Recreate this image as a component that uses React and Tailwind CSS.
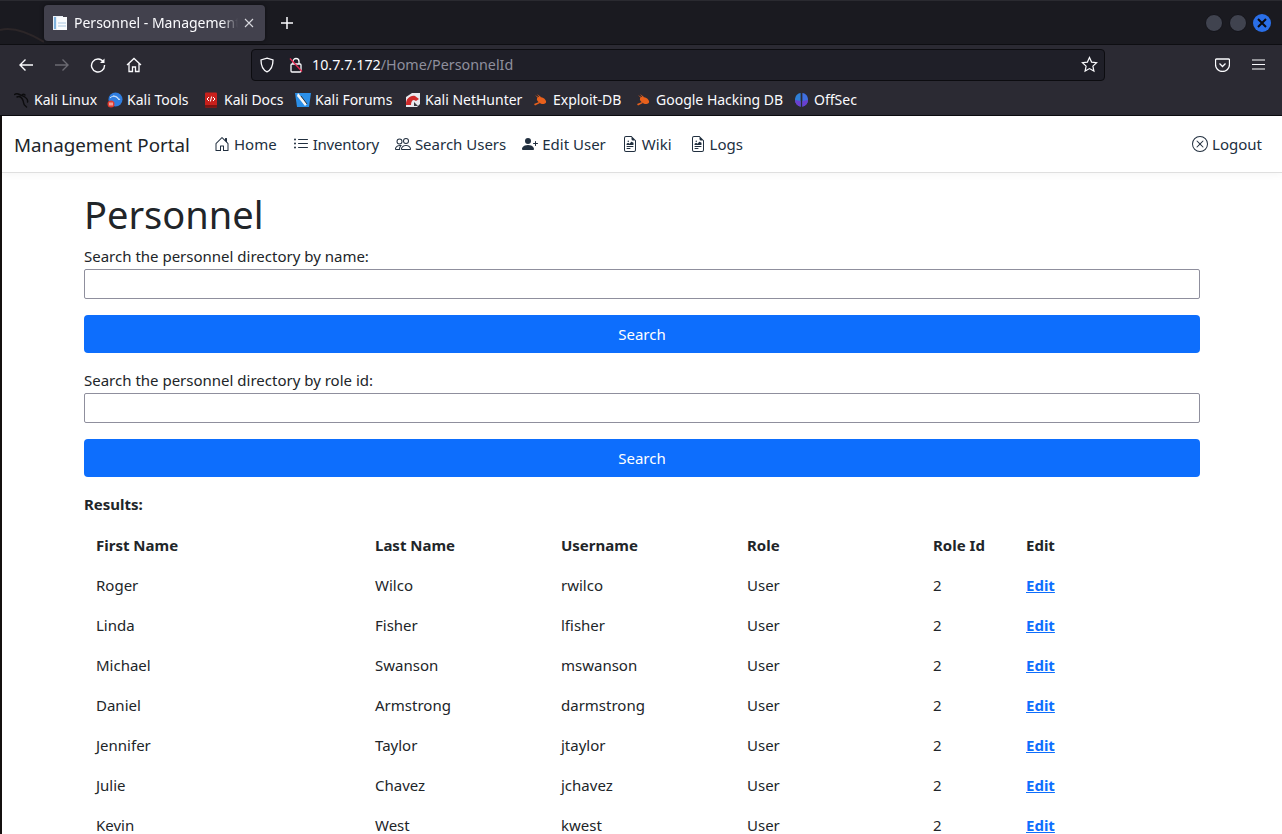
import React from 'react';
import { BsHouseDoor, BsListUl, BsPeople, BsPersonPlusFill, BsFileEarmarkRichtext, BsXCircle } from 'react-icons/bs';

const navLinks = [
  { name: 'Home', icon: BsHouseDoor, extra: '' },
  { name: 'Inventory', icon: BsListUl, extra: 'tracking-[-0.2px]' },
  { name: 'Search Users', icon: BsPeople, extra: '' },
  { name: 'Edit User', icon: BsPersonPlusFill, extra: '' },
  { name: 'Wiki', icon: BsFileEarmarkRichtext, extra: 'mr-[2px]' },
  { name: 'Logs', icon: BsFileEarmarkRichtext, extra: '' },
];

const people = [
  ['Roger', 'Wilco', 'rwilco'],
  ['Linda', 'Fisher', 'lfisher'],
  ['Michael', 'Swanson', 'mswanson'],
  ['Daniel', 'Armstrong', 'darmstrong'],
  ['Jennifer', 'Taylor', 'jtaylor'],
  ['Julie', 'Chavez', 'jchavez'],
  ['Kevin', 'West', 'kwest'],
];

const KaliDragon = () => (
  <svg width="16" height="16" viewBox="0 0 16 16" fill="none" stroke="#0c0c0e" strokeWidth="1.400" strokeLinecap="round">
    <path d="M0.500 2.500c1.500-1 3-1 5 0s4 1.500 6 3 2.500 3 2 4.500M3 5c2-1 4 0 5 1.500s1.500 3 1.500 4 1 3 3 4.500M8 3c1-1 2-1 3 0" />
  </svg>
);

const KaliTools = () => (
  <svg width="16" height="16" viewBox="0 0 16 16">
    <circle cx="8.500" cy="7.500" r="7" fill="#2f7de0" />
    <path d="M3 6c3-3 6-2 9 2M6 4c3 0 5 1 7 4" stroke="#cfe3fb" strokeWidth="1" fill="none" />
    <circle cx="4" cy="12" r="3.500" fill="#e03a2e" />
    <path d="M3 10.500v3M5 10.500v3" stroke="#fff" strokeWidth="1" />
  </svg>
);

const KaliDocs = () => (
  <svg width="14" height="16" viewBox="0 0 14 16">
    <rect x="1" y="0.500" width="12" height="15" rx="1" fill="#c8201c" />
    <rect x="1" y="13" width="12" height="2.500" fill="#7c1512" />
    <path d="M5 5L3 7l2 2M9 5l2 2-2 2M7.600 4.500L6.400 9.500" stroke="#fff" strokeWidth="1" fill="none" />
  </svg>
);

const KaliForums = () => (
  <svg width="16" height="16" viewBox="0 0 16 16">
    <path d="M0 1h16l-2 14H2z" fill="#2b8fe8" />
    <path d="M3 1l9 11-2 2L2 4z" fill="#f4f6f8" />
    <path d="M6 4l6 8" stroke="#333" strokeWidth="1" />
  </svg>
);

const NetHunter = () => (
  <svg width="16" height="16" viewBox="0 0 16 16">
    <path d="M1 5l6-4h8v11l-3 3H1z" fill="#e9e9ee" />
    <path d="M1 12c0-5 4-9 9-8l4 3-3 2-2-1c-2 0-3 2-3 5H1z" fill="#cf2a2a" />
    <path d="M9 10l4 4H9z" fill="#3a3a40" />
  </svg>
);

const ExploitDb = () => (
  <svg width="15" height="13" viewBox="0 0 15 13" fill="#e8601c">
    <ellipse cx="8.500" cy="7.500" rx="5" ry="3" transform="rotate(28 8.500 7.500)" />
    <path d="M2 2l5 3-1 1zM1 11l5-2 1 1-5 2.500zM4 1l4 3-1 1z" />
  </svg>
);

const OffSec = () => (
  <svg width="15" height="16" viewBox="0 0 15 16">
    <path d="M6.600 1C3 1.600 1 4.400 1 7.800c0 3 1.900 5.800 5.600 7z" fill="#2f7fd6" />
    <path d="M8.400 1c3.600.6 5.600 3.400 5.600 6.800 0 3-1.900 5.800-5.600 7z" fill="#3f6fe0" />
    <path d="M1 8c0 3 1.900 5.800 5.600 6.800V9zM14 8c0 3-1.900 5.800-5.600 6.800V9z" fill="#6a3fd0" />
  </svg>
);

const bookmarks = [
  { name: 'Kali Linux', icon: KaliDragon, width: 'w-[93px]' },
  { name: 'Kali Tools', icon: KaliTools, width: 'w-[97px]' },
  { name: 'Kali Docs', icon: KaliDocs, width: 'w-[91px]' },
  { name: 'Kali Forums', icon: KaliForums, width: 'w-[110px]' },
  { name: 'Kali NetHunter', icon: NetHunter, width: 'w-[128px]' },
  { name: 'Exploit-DB', icon: ExploitDb, width: 'w-[103px]' },
  { name: 'Google Hacking DB', icon: ExploitDb, width: 'w-[158px]' },
  { name: 'OffSec', icon: OffSec, width: 'w-[70px]' },
];

const TabBar = () => (
  <div className="relative h-[44px] bg-[#1a1a20] flex items-center pl-[44px] pr-[11px] border-t border-[#2a2a30]">
    <svg width="44" height="43" viewBox="0 0 44 43" fill="none" className="absolute left-0 top-0">
      <path d="M0 29c12-3 26 1 44 12" stroke="#2c2628" strokeWidth="2" />
    </svg>
    <div className="w-[221px] h-[36px] rounded-[4px] bg-[#42414d] flex items-center pl-[8px] pr-[11px] gap-[6px] shadow-[0_0_4px_rgba(0,0,0,0.5)]">
      <svg width="16" height="16" viewBox="0 0 16 16" className="shrink-0">
        <path d="M1 1h7l3 0v14H1z" fill="#e8eef5" />
        <rect x="5" y="2" width="10" height="13" fill="#f9fbfd" />
        <path d="M2 2h2v12H2z" fill="#7fb2dd" />
        <path d="M6 8h8M6 11h8" stroke="#a9c6e0" strokeWidth="1" />
      </svg>
      <span className="text-[14px] text-[#fbfbfe] whitespace-nowrap overflow-hidden flex-1 [mask-image:linear-gradient(to_right,black_90%,transparent)]">Personnel - Management Portal</span>
      <svg width="10" height="10" viewBox="0 0 10 10" stroke="#d8d8de" strokeWidth="1.100" className="shrink-0"><path d="M1 1l8 8M9 1l-8 8" /></svg>
    </div>
    <svg width="14" height="14" viewBox="0 0 14 14" stroke="#fbfbfe" strokeWidth="1.500" className="ml-[15px]"><path d="M7 1v12M1 7h12" /></svg>
    <div className="ml-auto flex items-center gap-[6px]">
      <span className="w-[18px] h-[18px] rounded-full bg-[#40434f] border border-[#14141a]" />
      <span className="w-[18px] h-[18px] rounded-full bg-[#40434f] border border-[#14141a]" />
      <span className="w-[18px] h-[18px] rounded-full bg-[#2a6fe8] flex items-center justify-center">
        <svg width="10" height="10" viewBox="0 0 10 10" stroke="#0a0a10" strokeWidth="2"><path d="M1 1l8 8M9 1l-8 8" /></svg>
      </span>
    </div>
  </div>
);

const Toolbar = () => (
  <div className="h-[40px] bg-[#2b2a33] border-t border-[#0e0e12] flex items-center text-[#fbfbfe]">
    <div className="w-[251px] flex items-center pl-[18px]">
      <svg width="16" height="16" viewBox="0 0 16 16" fill="none" stroke="currentColor" strokeWidth="1.400"><path d="M15 8H2M7.500 2.500L2 8l5.500 5.500" /></svg>
      <svg width="16" height="16" viewBox="0 0 16 16" fill="none" stroke="#6b6a72" strokeWidth="1.400" className="ml-[20px]"><path d="M1 8h13M8.500 2.500L14 8l-5.500 5.500" /></svg>
      <svg width="16" height="16" viewBox="0 0 16 16" fill="none" stroke="currentColor" strokeWidth="1.400" className="ml-[20px]">
        <path d="M13.500 5A6.500 6.500 0 1 0 14.500 8" />
        <path d="M14.500 1.500V6H10z" fill="currentColor" stroke="none" />
      </svg>
      <svg width="16" height="16" viewBox="0 0 16 16" fill="none" stroke="currentColor" strokeWidth="1.300" className="ml-[20px]">
        <path d="M1 8l7-6.500L15 8M3 6.500V14.500h3.500V10h3v4.500H13V6.500" />
      </svg>
    </div>
    <div className="w-[854px] h-[32px] bg-[#1f1f28] border border-[#0c0c10] rounded-[4px] flex items-center pl-[7px] pr-[6px]">
      <svg width="16" height="16" viewBox="0 0 16 16" fill="none" stroke="currentColor" strokeWidth="1.300"><path d="M8 1.200l6 1.800c0 6-1.500 9.800-6 11.800C3.500 12.800 2 9 2 3z" /></svg>
      <svg width="16" height="16" viewBox="0 0 16 16" fill="none" stroke="currentColor" strokeWidth="1.300" className="ml-[13px]">
        <rect x="3" y="7" width="10" height="8" rx="1" />
        <path d="M5 7V4.500a3 3 0 0 1 6 0V7" />
        <path d="M2 1.500l12 13" stroke="#e22850" strokeWidth="1.300" />
      </svg>
      <span className="ml-[8px] text-[14.300px]">10.7.7.172<span className="text-[#8f8f9d]">/Home/PersonnelId</span></span>
      <svg width="17" height="17" viewBox="0 0 17 17" fill="none" stroke="currentColor" strokeWidth="1.200" className="ml-auto">
        <path d="M8.500 1.500l2.100 4.600 5 .6-3.700 3.400 1 5-4.400-2.500-4.400 2.500 1-5L1.400 6.700l5-.6z" />
      </svg>
    </div>
    <div className="flex-1 flex items-center justify-end pr-[17px] gap-[22px]">
      <svg width="15" height="14" viewBox="0 0 15 14" fill="none" stroke="currentColor" strokeWidth="1.300">
        <path d="M1.500 1h12a1 1 0 0 1 1 1v4.500a7 7 0 0 1-14 0V2a1 1 0 0 1 1-1z" />
        <path d="M4.500 5.500l3 3 3-3" />
      </svg>
      <svg width="13" height="11" viewBox="0 0 13 11" stroke="currentColor" strokeWidth="1.200"><path d="M0 1h13M0 5.500h13M0 10h13" /></svg>
    </div>
  </div>
);

const BookmarksBar = () => (
  <div className="h-[32px] bg-[#2b2a33] border-b border-[#0c0c10] flex items-center pl-[14px] text-[14px] text-[#fbfbfe]">
    {bookmarks.map((b) => (
      <div key={b.name} className={`flex items-center shrink-0 ${b.width}`}>
        <span className="w-[20px] shrink-0"><b.icon /></span>
        <span className="whitespace-nowrap">{b.name}</span>
      </div>
    ))}
  </div>
);

const Navbar = () => (
  <nav className="h-[57px] bg-white border-b border-[#dfdfdf] shadow-[0_2px_8px_rgba(0,0,0,0.04)] flex items-center pl-[12px] pr-[20px] text-[#212f3f]">
    <span className="text-[18.800px] text-[#212529] mr-[24px] translate-y-px">Management Portal</span>
    <div className="flex items-center gap-[16px] text-[15px]">
      {navLinks.map((l) => (
        <a key={l.name} className={`flex items-center gap-[4px] ${l.extra}`}>
          <l.icon size={16} />
          {l.name}
        </a>
      ))}
    </div>
    <a className="ml-auto flex items-center gap-[4px] text-[15px]">
      <BsXCircle size={16} />
      Logout
    </a>
  </nav>
);

const SearchForm = ({ label }) => (
  <div>
    <label className="block text-[15px] leading-[22px] mb-[2px]">{label}</label>
    <input className="block w-full h-[30px] border border-[#8f8f9d] rounded-[2px] bg-white" />
    <button className="mt-[16px] w-full h-[38px] rounded-[4px] bg-[#0d6efd] text-white text-[15px]">Search</button>
  </div>
);

const ResultsTable = () => (
  <table className="w-full table-fixed border-collapse text-[15px]">
    <colgroup>
      <col className="w-[279px]" />
      <col className="w-[186px]" />
      <col className="w-[186px]" />
      <col className="w-[186px]" />
      <col className="w-[93px]" />
      <col className="w-[186px]" />
    </colgroup>
    <thead>
      <tr className="h-[40px]">
        {['First Name', 'Last Name', 'Username', 'Role', 'Role Id', 'Edit'].map((h) => (
          <th key={h} className="px-[12px] text-left font-bold">{h}</th>
        ))}
      </tr>
    </thead>
    <tbody>
      {people.map(([first, last, user]) => (
        <tr key={user} className="h-[40px]">
          <td className="px-[12px]">{first}</td>
          <td className="px-[12px]">{last}</td>
          <td className="px-[12px]">{user}</td>
          <td className="px-[12px]">User</td>
          <td className="px-[12px]">2</td>
          <td className="px-[12px]"><a className="font-bold underline text-[#0d6efd]">Edit</a></td>
        </tr>
      ))}
    </tbody>
  </table>
);

export default function App() {
  return (
    <div className="w-[1282px] h-[834px] overflow-hidden flex flex-col bg-white font-['Noto_Sans',sans-serif] text-[#212529]">
      <TabBar />
      <Toolbar />
      <BookmarksBar />
      <div className="flex-1 flex min-h-0">
        <div className="w-[2px] bg-[#14100f]" />
        <div className="flex-1 min-w-0">
          <Navbar />
          <main className="w-[1116px] mx-auto pt-[17px]">
            <h1 className="text-[38px] leading-[48px] mb-[7px]">Personnel</h1>
            <SearchForm label="Search the personnel directory by name:" />
            <div className="h-[16px]" />
            <SearchForm label="Search the personnel directory by role id:" />
            <p className="mt-[15px] mb-[9px] font-bold leading-[24px] text-[15px]">Results:</p>
            <ResultsTable />
          </main>
        </div>
      </div>
    </div>
  );
}
